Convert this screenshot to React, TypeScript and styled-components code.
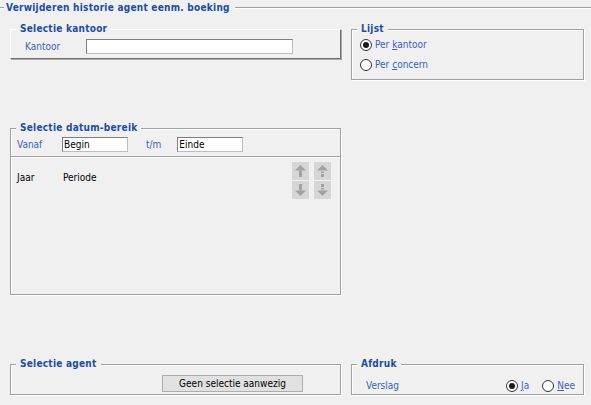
import styled, { createGlobalStyle } from "styled-components";

const GlobalStyle = createGlobalStyle`
  html, body {
    margin: 0;
    padding: 0;
    background: #f0f0f0;
  }
  body {
    font-family: "DejaVu Sans Condensed", "DejaVu Sans", Verdana, sans-serif;
    font-size: 10px;
    color: #000;
  }
`;

const TITLE = "#1e4d9e";
const LABEL = "#3a62b0";

const Page = styled.div`
  width: 591px;
  height: 405px;
  padding-top: 2px;
  box-sizing: border-box;
  overflow: hidden;
`;

const Header = styled.div`
  display: flex;
  align-items: center;
  height: 12px;
  line-height: 12px;
  font-weight: bold;
  letter-spacing: 0.25px;
  color: ${TITLE};
  &::before,
  &::after {
    content: "";
    height: 0;
    border-top: 1px solid #a0a0a0;
    border-bottom: 1px solid #fff;
  }
  &::before {
    width: 4px;
    margin-right: 2px;
  }
  &::after {
    flex: 1;
    margin-left: 5px;
  }
`;

const Body = styled.div`
  display: grid;
  grid-template-columns: 331px 233px;
  grid-template-rows: 99px 236px auto;
  column-gap: 10px;
  padding: 9px 0 0 10px;
  align-items: start;
`;

const Group = styled.fieldset<{ $raised?: boolean }>`
  margin: 0;
  padding: 0;
  min-width: 0;
  border: 1px solid #a0a0a0;
  box-shadow: inset 1px 1px 0 #fff, 1px 1px 0 #fff;
  ${(p) =>
    p.$raised &&
    `
    border-color: #fff #6e6e6e #6e6e6e #fff;
    box-shadow: 1px 1px 0 #a8a8a8;
  `}
`;

const Legend = styled.legend`
  margin-left: 5px;
  padding: 0 4px;
  line-height: 12px;
  font-weight: bold;
  letter-spacing: 0.25px;
  color: ${TITLE};
  background: #f0f0f0;
`;

const Label = styled.span<{ $w?: number }>`
  color: ${LABEL};
  width: ${(p) => (p.$w ? `${p.$w}px` : "auto")};
  flex-shrink: 0;
`;

const Field = styled.input<{ $w: number }>`
  box-sizing: border-box;
  width: ${(p) => p.$w}px;
  height: 15px;
  margin: 0;
  padding: 0 1px;
  border: 1px solid;
  border-color: #7f7f7f #bdbdbd #bdbdbd #7f7f7f;
  background: #fff;
  font: inherit;
  color: #000;
  outline: none;
`;

const KantoorRow = styled.div`
  display: flex;
  align-items: center;
  padding: 4px 0 4px 14px;
`;

const RadioList = styled.div`
  display: flex;
  flex-direction: column;
  gap: 1px;
  padding: 0 0 5px 8px;
`;

const RadioItem = styled.label`
  display: flex;
  align-items: center;
  gap: 3px;
  height: 19px;
  color: ${LABEL};
  u {
    text-decoration-thickness: 1px;
    text-underline-offset: 1px;
  }
`;

const Dot = styled.span<{ $on?: boolean }>`
  box-sizing: border-box;
  width: 12px;
  height: 12px;
  border-radius: 50%;
  border: 1px solid #333;
  background: #fff;
  display: inline-flex;
  align-items: center;
  justify-content: center;
  &::after {
    content: "";
    width: 6px;
    height: 6px;
    border-radius: 50%;
    background: ${(p) => (p.$on ? "#1a1a1a" : "transparent")};
  }
`;

const RangeRow = styled.div`
  display: flex;
  align-items: center;
  height: 23px;
  box-sizing: border-box;
  padding: 3px 0 5px 6px;
  border-bottom: 1px solid #a0a0a0;
  box-shadow: 0 1px 0 #fff;
`;

const Until = styled(Label)`
  margin: 0 16px 0 18px;
`;

const ListArea = styled.div`
  height: 136px;
  margin-top: 1px;
  box-sizing: border-box;
  padding: 4px 9px 0 6px;
  display: flex;
  align-items: flex-start;
`;

const ColHead = styled.span<{ $w?: number }>`
  width: ${(p) => (p.$w ? `${p.$w}px` : "auto")};
  margin-top: 10px;
`;

const Mover = styled.div`
  margin-left: auto;
  display: grid;
  grid-template-columns: 17px 17px;
  grid-auto-rows: 18px;
  column-gap: 5px;
  row-gap: 1px;
`;

const MoveBtn = styled.div`
  background: #d6d6d6;
  display: flex;
  align-items: center;
  justify-content: center;
  svg {
    display: block;
  }
`;

const AgentRow = styled.div`
  padding: 5px 0 2px 151px;
`;

const PlainButton = styled.button`
  box-sizing: border-box;
  width: 141px;
  height: 17px;
  margin: 0;
  padding: 0;
  border: 1px solid #adadad;
  background: #e1e1e1;
  font: inherit;
  color: #000;
`;

const PrintRow = styled.div`
  display: flex;
  align-items: center;
  padding: 9px 8px 2px 14px;
  height: 24px;
  box-sizing: border-box;
`;

const PrintChoices = styled.div`
  margin-left: auto;
  display: flex;
  gap: 13px;
`;

// grey "disabled" move arrow; split = move to first/last
function Arrow({ down, split }: { down?: boolean; split?: boolean }) {
  const fill = "#a2a2a2";
  return (
    <svg width="11" height="12" viewBox="0 0 11 12" style={down ? { transform: "rotate(180deg)" } : undefined}>
      <path d="M5.5 0 L11 5.5 L0 5.5 Z" fill={fill} />
      {split ? (
        <>
          <rect x="4" y="6.5" width="3" height="1.5" fill={fill} />
          <rect x="4" y="9" width="3" height="3" fill={fill} />
        </>
      ) : (
        <rect x="4" y="5.5" width="3" height="6.5" fill={fill} />
      )}
    </svg>
  );
}

export default function App() {
  return (
    <Page>
      <GlobalStyle />
      <Header>Verwijderen historie agent eenm. boeking</Header>
      <Body>
        <Group $raised>
          <Legend>Selectie kantoor</Legend>
          <KantoorRow>
            <Label $w={61}>Kantoor</Label>
            <Field $w={207} readOnly value="" />
          </KantoorRow>
        </Group>

        <Group>
          <Legend>Lijst</Legend>
          <RadioList>
            <RadioItem>
              <Dot $on />
              <span>
                Per <u>k</u>antoor
              </span>
            </RadioItem>
            <RadioItem>
              <Dot />
              <span>
                Per <u>c</u>oncern
              </span>
            </RadioItem>
          </RadioList>
        </Group>

        <Group>
          <Legend>Selectie datum-bereik</Legend>
          <RangeRow>
            <Label $w={45}>Vanaf</Label>
            <Field $w={66} readOnly value="Begin" />
            <Until>t/m</Until>
            <Field $w={66} readOnly value="Einde" />
          </RangeRow>
          <ListArea>
            <ColHead $w={46}>Jaar</ColHead>
            <ColHead>Periode</ColHead>
            <Mover>
              <MoveBtn>
                <Arrow />
              </MoveBtn>
              <MoveBtn>
                <Arrow split />
              </MoveBtn>
              <MoveBtn>
                <Arrow down />
              </MoveBtn>
              <MoveBtn>
                <Arrow down split />
              </MoveBtn>
            </Mover>
          </ListArea>
        </Group>
        <div />

        <Group>
          <Legend>Selectie agent</Legend>
          <AgentRow>
            <PlainButton>Geen selectie aanwezig</PlainButton>
          </AgentRow>
        </Group>

        <Group>
          <Legend>Afdruk</Legend>
          <PrintRow>
            <Label>Verslag</Label>
            <PrintChoices>
              <RadioItem>
                <Dot $on />
                <span>
                  <u>J</u>a
                </span>
              </RadioItem>
              <RadioItem>
                <Dot />
                <span>
                  <u>N</u>ee
                </span>
              </RadioItem>
            </PrintChoices>
          </PrintRow>
        </Group>
      </Body>
    </Page>
  );
}
